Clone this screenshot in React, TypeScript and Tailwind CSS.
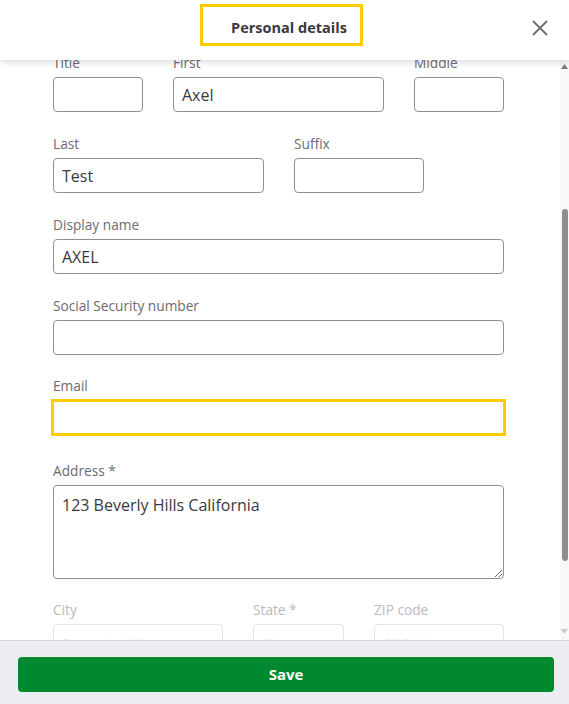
import React, { useLayoutEffect, useRef } from 'react'

const font = { fontFamily: '"Open Sans", "Noto Sans", "Liberation Sans", sans-serif' }

function Field({
  label,
  value,
  width,
}: {
  label: string
  value?: string
  width: string
}) {
  return (
    <div className={`flex flex-col ${width}`}>
      <label className="h-4 text-[13.7px] leading-4 text-[#6b6c72] mb-[6px]">{label}</label>
      <input
        readOnly
        value={value ?? ''}
        className="h-[35px] w-full rounded-[4px] border border-[#8d9096] px-2 text-[16px] text-[#393a3d] outline-none"
      />
    </div>
  )
}

function Faded({ label, value, width }: { label: string; value: string; width: string }) {
  return (
    <div className={`flex flex-col ${width}`}>
      <label className="h-4 text-[13.7px] leading-4 text-[#b9bbc0] mb-[6px]">{label}</label>
      <input
        readOnly
        value={value}
        className="h-[35px] w-full rounded-[4px] border border-[#e3e5e8] px-2 pt-[6px] text-[16px] text-[#eceef0] outline-none"
      />
    </div>
  )
}

export default function App() {
  const scrollRef = useRef<HTMLDivElement>(null)

  useLayoutEffect(() => {
    if (scrollRef.current) scrollRef.current.scrollTop = 29
  }, [])

  return (
    <div className="w-[569px] h-[704px] flex flex-col bg-white overflow-hidden" style={font}>
      {/* Header */}
      <header className="relative z-10 h-[60px] shrink-0 flex items-start justify-center bg-white shadow-[0_3px_6px_rgba(0,0,0,0.12)]">
        <div className="mt-[4px] mr-[6px] h-[42px] flex items-center border-[3px] border-[#ffcc00] pl-7 pr-[13px] pt-[5px]">
          <h1 className="text-[14.5px] font-bold text-[#393a3d]">Personal details</h1>
        </div>
        <button className="absolute right-[21px] top-[20px] w-4 h-4 flex items-center justify-center text-[#6b6c72]">
          <svg width="16" height="16" viewBox="0 0 16 16" fill="none" stroke="currentColor" strokeWidth="1.8" strokeLinecap="round">
            <path d="M1.5 1.5 L14.5 14.5 M14.5 1.5 L1.5 14.5" />
          </svg>
        </button>
      </header>

      {/* Body */}
      <div className="flex-1 flex min-h-0">
        <div ref={scrollRef} className="flex-1 overflow-hidden">
          <div className="pt-[24px] pl-[53px] pr-[56px] pb-10 flex flex-col w-[560px]">
            <div className="flex gap-[30px] mb-[24px]">
              <Field label="Title" width="w-[90px]" />
              <Field label="First" value="Axel" width="w-[211px]" />
              <Field label="Middle" width="w-[90px]" />
            </div>
            <div className="flex gap-[30px] mb-[24px]">
              <Field label="Last" value="Test" width="w-[211px]" />
              <Field label="Suffix" width="w-[130px]" />
            </div>
            <div className="mb-[24px]">
              <Field label="Display name" value="AXEL" width="w-full" />
            </div>
            <div className="mb-[23px]">
              <Field label="Social Security number" width="w-full" />
            </div>
            <div className="mb-[27px] -mx-[2px]">
              <div className="flex flex-col">
                <label className="h-4 text-[13.7px] leading-4 text-[#6b6c72] mb-[5px] ml-[2px]">Email</label>
                <input
                  readOnly
                  value=""
                  className="h-[37px] w-full border-[3px] border-[#ffcc00] px-2 text-[16px] text-[#393a3d] outline-none"
                />
              </div>
            </div>
            <div className="flex flex-col mb-[23px]">
              <label className="h-4 text-[13.7px] leading-4 text-[#6b6c72] mb-[6px]">Address *</label>
              <textarea
                readOnly
                value="123 Beverly Hills California"
                className="h-[94px] w-full rounded-[4px] border border-[#8d9096] px-2 py-[9px] text-[16px] leading-5 text-[#393a3d] outline-none resize-y"
              />
            </div>
            <div className="flex gap-[30px]">
              <Faded label="City" value="Beverly Hills" width="w-[170px]" />
              <Faded label="State *" value="CA" width="w-[91px]" />
              <Faded label="ZIP code" value="90210" width="w-[130px]" />
            </div>
          </div>
        </div>

        {/* Scrollbar */}
        <div className="w-[9px] shrink-0 bg-[#f8f8f8] flex flex-col items-center">
          <svg width="7" height="5" viewBox="0 0 7 5" className="mt-[4px]">
            <path d="M0 5 L3.5 0 L7 5 Z" fill="#7a7a7a" />
          </svg>
          <div className="mt-[140px] w-[6px] h-[352px] rounded-full bg-[#8e8e8e]" />
          <div className="flex-1" />
          <svg width="7" height="5" viewBox="0 0 7 5" className="mb-[6px]">
            <path d="M0 0 L7 0 L3.5 5 Z" fill="#c8c8c8" />
          </svg>
        </div>
      </div>

      {/* Footer */}
      <footer className="h-[64px] shrink-0 border-t border-[#d4d7dc] bg-[#eceef1] pt-4 pl-[18px] pr-[15px]">
        <button className="w-full h-[35px] rounded-[4px] bg-[#00892e] text-white text-[15px] font-bold">
          Save
        </button>
      </footer>
    </div>
  )
}
